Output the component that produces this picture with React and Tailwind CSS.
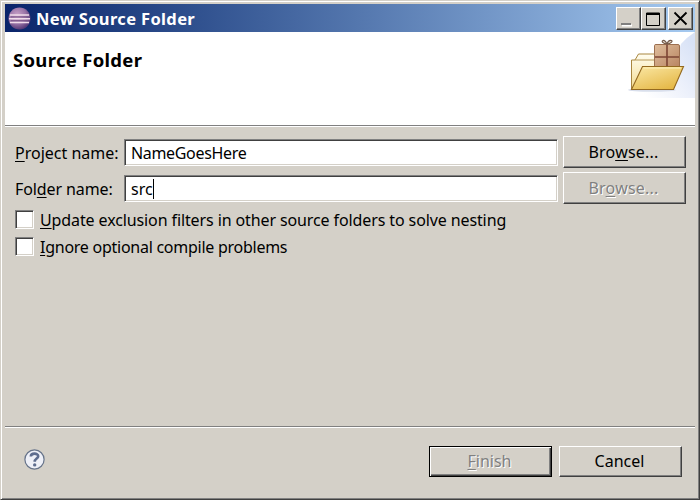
import React from "react";

function Mnemonic({ text, at }) {
  return (
    <>
      {text.slice(0, at)}
      <span className="underline decoration-1 underline-offset-2">{text[at]}</span>
      {text.slice(at + 1)}
    </>
  );
}

const raised =
  "border border-t-white border-l-white border-r-[#404040] border-b-[#404040] bg-[#d4d0c8] shadow-[inset_-1px_-1px_0_#808080]";
const sunken =
  "border border-t-[#808080] border-l-[#808080] border-r-white border-b-white bg-white shadow-[inset_1px_1px_0_#404040,inset_-1px_-1px_0_#d4d0c8]";

function Button({ className, children, disabled }) {
  return (
    <button
      type="button"
      className={`flex w-[123px] shrink-0 items-center justify-center pb-0.5 ${raised} ${
        disabled ? "text-[#808080] [text-shadow:1px_1px_0_#ffffff]" : "text-black"
      } ${className || ""}`}
    >
      {children}
    </button>
  );
}

function Checkbox({ className, tracking, text }) {
  return (
    <label className={`flex h-5 items-center ${className}`}>
      <span className={`size-[19px] shrink-0 ${sunken}`} />
      <span className={`ml-1.5 pt-px whitespace-nowrap ${tracking}`}>
        <Mnemonic text={text} at={0} />
      </span>
    </label>
  );
}

function EclipseLogo() {
  return (
    <svg className="ml-[3px] size-[23px]" viewBox="0 0 23 23">
      <defs>
        <radialGradient id="orb" cx="0.4" cy="0.35" r="0.65">
          <stop offset="0" stopColor="#c9a2c8" />
          <stop offset="0.6" stopColor="#9873a6" />
          <stop offset="1" stopColor="#573a78" />
        </radialGradient>
      </defs>
      <circle cx="11.5" cy="11.5" r="11" fill="url(#orb)" />
      <path d="M2 8H21M1 11.8H22M2 15.6H21" stroke="#f0dce9" strokeWidth="1.5" />
      <path d="M3 9.9H20M3 13.7H20" stroke="#795587" strokeWidth="1" />
    </svg>
  );
}

function FolderBanner() {
  return (
    <svg className="h-[67px] w-[75px]" viewBox="0 0 75 67">
      <defs>
        <linearGradient id="sky" x1="0.15" y1="0.8" x2="1" y2="0.2">
          <stop offset="0" stopColor="#fff" />
          <stop offset="0.5" stopColor="#edf1fb" />
          <stop offset="1" stopColor="#d8e2f6" />
        </linearGradient>
        <linearGradient id="front" x1="0" y1="0" x2="0.7" y2="1">
          <stop offset="0" stopColor="#fbe9a7" />
          <stop offset="1" stopColor="#e5b847" />
        </linearGradient>
        <linearGradient id="back" x1="0" y1="0" x2="0" y2="1">
          <stop offset="0" stopColor="#fffdf0" />
          <stop offset="1" stopColor="#f4dc91" />
        </linearGradient>
        <linearGradient id="box" x1="0" y1="0" x2="1" y2="1">
          <stop offset="0" stopColor="#dfbd9c" />
          <stop offset="1" stopColor="#b98562" />
        </linearGradient>
      </defs>
      <path d="M75 0V66H6Q50 58 61 12Q67 5 75 0Z" fill="url(#sky)" />
      <ellipse cx="32" cy="58" rx="24" ry="1.8" fill="#d9dfec" />
      <path d="M11.5 57V28H15L18.5 22H38V57Z" fill="url(#back)" stroke="#a9863f" />
      <path d="M15 28H35" stroke="#b79958" />
      <path d="M34.5 13.5Q34.5 12.5 36 12.5H58Q59.5 12.5 59.5 14V35H34.5Z" fill="url(#box)" stroke="#9c6f50" />
      <path d="M47 13V35M35 25H59" stroke="#7d4534" strokeWidth="1.6" />
      <path d="M47 12C43 12 41 9 43 8.5S46 10 47 12C48 9 50 8 51.5 8.5S51 12 47 12Z" fill="#eadfd2" stroke="#725848" strokeWidth="1.2" />
      <path d="M11.5 57.5L22.5 34.5H63.5L53.5 57.5Z" fill="url(#front)" stroke="#94691f" strokeWidth="1.1" />
      <path d="M23.5 36H61" stroke="#fff2bc" />
    </svg>
  );
}

export default function App() {
  return (
    <div className="h-[500px] w-[700px] overflow-hidden bg-[#d4d0c8] font-['Noto_Sans','Open_Sans',sans-serif] text-[16px] leading-5 text-black">
      <div className="flex h-full flex-col border-t border-r border-b border-l border-t-[#d4d0c8] border-l-[#d4d0c8] border-r-[#404040] border-b-[#404040] pt-[3px] pr-1 pb-px pl-[3px] shadow-[inset_1px_1px_0_#ffffff,inset_-1px_-1px_0_#808080]">
        <div className="ml-px flex h-7 shrink-0 items-center bg-linear-to-r from-[#0a246a] to-[#a6caf0] pt-px pr-[2px]">
          <EclipseLogo />
          <h1 className="ml-[5px] flex-1 text-[16.5px] font-bold tracking-[0.35px] text-white">New Source Folder</h1>
          <button aria-label="Minimize" className={`h-[23px] w-[25px] ${raised}`}>
            <svg className="h-full w-full" viewBox="0 0 23 21">
              <path d="M5 17.5H15" stroke="#fff" strokeWidth="2" />
              <path d="M4 16H14" stroke="#808080" strokeWidth="2" />
            </svg>
          </button>
          <button aria-label="Maximize" className={`h-[23px] w-[25px] ${raised}`}>
            <svg className="h-full w-full" viewBox="0 0 23 21">
              <path d="M4.5 17.5V5H17.5V17.5Z" fill="none" stroke="#000" />
              <path d="M4 6H18" stroke="#000" strokeWidth="2" />
            </svg>
          </button>
          <button aria-label="Close" className={`ml-[2px] h-[23px] w-[25px] ${raised}`}>
            <svg className="h-full w-full" viewBox="0 0 23 21">
              <path d="M5.5 4.5L17.5 16.5M17.5 4.5L5.5 16.5" stroke="#000" strokeWidth="1.8" />
            </svg>
          </button>
        </div>
        <header className="ml-px flex h-[94px] shrink-0 justify-between border-b border-[#808080] bg-white">
          <h2 className="pt-[18px] pl-2 text-[18.5px] font-bold tracking-[0.3px]">Source Folder</h2>
          <FolderBanner />
        </header>
        <main className="ml-px flex flex-1 flex-col border-t border-white pt-[9px] pl-[10px]">
          <div className="flex h-8 items-center">
            <label className="w-[109px] pt-px"><Mnemonic text="Project name:" at={0} /></label>
            <div className={`flex h-[27px] w-[434px] items-center pt-px pl-1.5 tracking-[-0.33px] ${sunken}`}>NameGoesHere</div>
            <Button className="ml-[5px] h-8 tracking-[0.2px]"><span className="mr-0.5 pt-px"><Mnemonic text="Browse..." at={3} /></span></Button>
          </div>
          <div className="mt-1 flex h-8 items-center">
            <label className="w-[109px] pt-px tracking-[-0.1px]"><Mnemonic text="Folder name:" at={3} /></label>
            <div className={`flex h-[27px] w-[434px] items-center pt-px pl-1.5 ${sunken}`}>
              src<span className="h-5 w-px bg-black" />
            </div>
            <Button className="ml-[5px] h-8 tracking-[0.2px]" disabled><span className="mr-0.5 pt-px"><Mnemonic text="Browse..." at={2} /></span></Button>
          </div>
          <Checkbox className="mt-[5px]" tracking="tracking-[-0.11px]" text="Update exclusion filters in other source folders to solve nesting" />
          <Checkbox className="mt-[7px]" tracking="tracking-[-0.26px]" text="Ignore optional compile problems" />
        </main>
        <footer className="ml-px flex h-[72px] shrink-0 items-start border-t border-[#808080] pt-[19px] pr-[13px] pl-[19px] shadow-[inset_0_1px_0_#ffffff]">
          <svg className="mt-[3px] size-[21px]" viewBox="0 0 21 21">
            <circle cx="10.5" cy="10.5" r="9.6" fill="#eef0f8" stroke="#66738a" strokeWidth="1.2" />
            <path d="M6.8 7.5C7 3.7 14.2 3.8 14.2 7.2C14.2 9.5 10.7 9.6 10.7 12.7" fill="none" stroke="#5e6d8f" strokeWidth="2.6" />
            <circle cx="10.7" cy="15.9" r="1.7" fill="#5e6d8f" />
          </svg>
          <Button className="ml-auto h-[31px] border-black! shadow-[inset_1px_1px_0_#fff,inset_-1px_-1px_0_#404040,inset_-2px_-2px_0_#808080]!" disabled>
            <span className="mr-0.5"><Mnemonic text="Finish" at={0} /></span>
          </Button>
          <Button className="ml-[7px] h-[31px]"><span className="mr-0.5">Cancel</span></Button>
        </footer>
      </div>
    </div>
  );
}
